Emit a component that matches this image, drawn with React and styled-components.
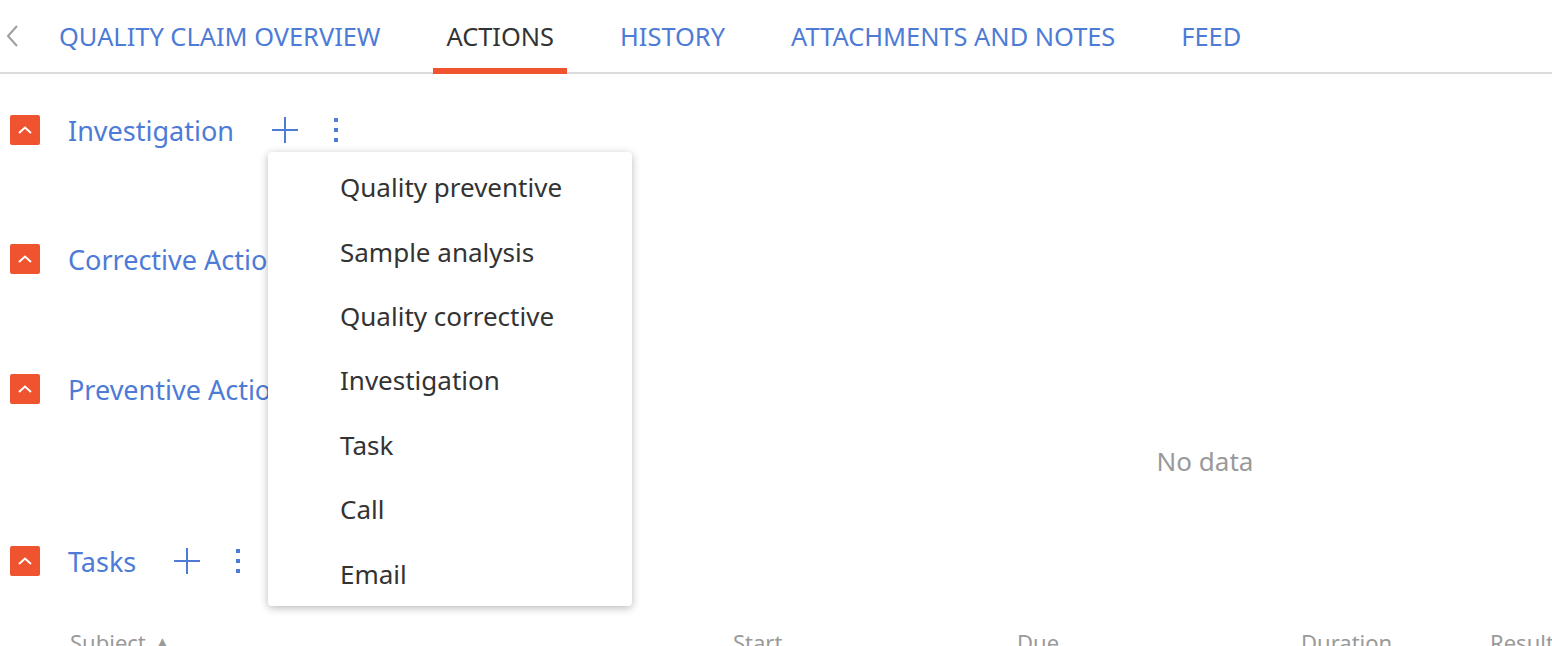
import React from 'react';
import styled, { createGlobalStyle } from 'styled-components';

const GlobalStyle = createGlobalStyle`
    body {
        margin: 0;
        background: #fff;
        font-family: "Noto Sans", "Open Sans", Arial, sans-serif;
        overflow: hidden;
    }
`;

const Page = styled.div`
    position: relative;
    width: 1552px;
    height: 646px;
    overflow: hidden;
`;

const TabBar = styled.div`
    display: flex;
    align-items: stretch;
    height: 72px;
    border-bottom: 2px solid #dcdcdc;
`;

const BackButton = styled.div`
    display: flex;
    align-items: center;
    box-sizing: border-box;
    width: 46px;
    padding-left: 5px;
    color: #9e9e9e;
`;

const Tab = styled.div`
    display: flex;
    align-items: center;
    padding: 4px 13px 0;
    margin-right: 40px;
    margin-bottom: -2px;
    font-size: 25.4px;
    color: ${p => (p.active ? '#333' : '#4d7bd6')};
    border-bottom: 6px solid ${p => (p.active ? '#f0532f' : 'transparent')};
`;

const Content = styled.div`
    padding-top: 36px;
`;

const SectionHeader = styled.div`
    display: flex;
    align-items: center;
    height: 40px;
    padding-left: 10px;
`;

const Toggle = styled.div`
    width: 30px;
    height: 30px;
    border-radius: 2px;
    background: #f0532f;
    display: flex;
    align-items: center;
    justify-content: center;
`;

const Title = styled.div`
    margin-left: 28px;
    font-size: 27px;
    color: #4d7bd6;
`;

const IconButton = styled.div`
    display: flex;
    align-items: center;
    justify-content: center;
    margin-left: ${p => p.gap}px;
    color: #4d7bd6;
`;

const SectionBody = styled.div`
    height: ${p => p.h}px;
    display: flex;
    align-items: center;
    justify-content: center;
    padding-left: 858px;
`;

const Empty = styled.div`
    font-size: 26px;
    color: #999;
    margin-top: -28px;
`;

const TableHead = styled.div`
    display: grid;
    grid-template-columns: 663px 284px 284px 189px 100px;
    padding: 46px 0 0 70px;
    font-size: 22px;
    color: #9a9a9a;
`;

const Menu = styled.div`
    position: absolute;
    left: 268px;
    top: 152px;
    width: 364px;
    height: 454px;
    box-sizing: border-box;
    padding-top: 3px;
    background: #fff;
    border-radius: 4px;
    box-shadow: 0 2px 8px rgba(0, 0, 0, 0.28);
`;

const MenuItem = styled.div`
    height: 64.4px;
    display: flex;
    align-items: center;
    padding-left: 72px;
    font-size: 26px;
    color: #333;
`;

const Chevron = () => (
    <svg width="16" height="10" viewBox="0 0 16 10">
        <path d="M2 8 L8 2.5 L14 8" fill="none" stroke="#fff" strokeWidth="2" />
    </svg>
);

const Plus = () => (
    <svg width="28" height="28" viewBox="0 0 28 28">
        <path d="M14 1 V27 M1 14 H27" stroke="currentColor" strokeWidth="2" />
    </svg>
);

const Kebab = () => (
    <svg width="6" height="26" viewBox="0 0 6 26">
        <rect x="1" y="1" width="4" height="4" fill="currentColor" />
        <rect x="1" y="11" width="4" height="4" fill="currentColor" />
        <rect x="1" y="21" width="4" height="4" fill="currentColor" />
    </svg>
);

const Section = ({ title, actions, children, bodyHeight }) => (
    <div>
        <SectionHeader>
            <Toggle><Chevron /></Toggle>
            <Title>{title}</Title>
            {actions && (
                <>
                    <IconButton gap={actions}><Plus /></IconButton>
                    <IconButton gap={34}><Kebab /></IconButton>
                </>
            )}
        </SectionHeader>
        {bodyHeight ? <SectionBody h={bodyHeight}>{children}</SectionBody> : null}
    </div>
);

const tabs = ['QUALITY CLAIM OVERVIEW', 'ACTIONS', 'HISTORY', 'ATTACHMENTS AND NOTES', 'FEED'];
const menuItems = ['Quality preventive', 'Sample analysis', 'Quality corrective', 'Investigation', 'Task', 'Call', 'Email'];

export default function App() {
    return (
        <Page>
            <GlobalStyle />
            <TabBar>
                <BackButton>
                    <svg width="14" height="22" viewBox="0 0 14 22">
                        <path d="M12 1 L3 11 L12 21" fill="none" stroke="currentColor" strokeWidth="2" />
                    </svg>
                </BackButton>
                {tabs.map(t => (
                    <Tab key={t} active={t === 'ACTIONS'}>{t}</Tab>
                ))}
            </TabBar>
            <Content>
                <Section title="Investigation" actions={37} bodyHeight={89} />
                <Section title="Corrective Actions" bodyHeight={90} />
                <Section title="Preventive Actions" bodyHeight={132}>
                    <Empty>No data</Empty>
                </Section>
                <Section title="Tasks" actions={37} />
                <TableHead>
                    <div>Subject ▲</div>
                    <div>Start</div>
                    <div>Due</div>
                    <div>Duration</div>
                    <div>Result</div>
                </TableHead>
            </Content>
            <Menu>
                {menuItems.map(m => <MenuItem key={m}>{m}</MenuItem>)}
            </Menu>
        </Page>
    );
}
